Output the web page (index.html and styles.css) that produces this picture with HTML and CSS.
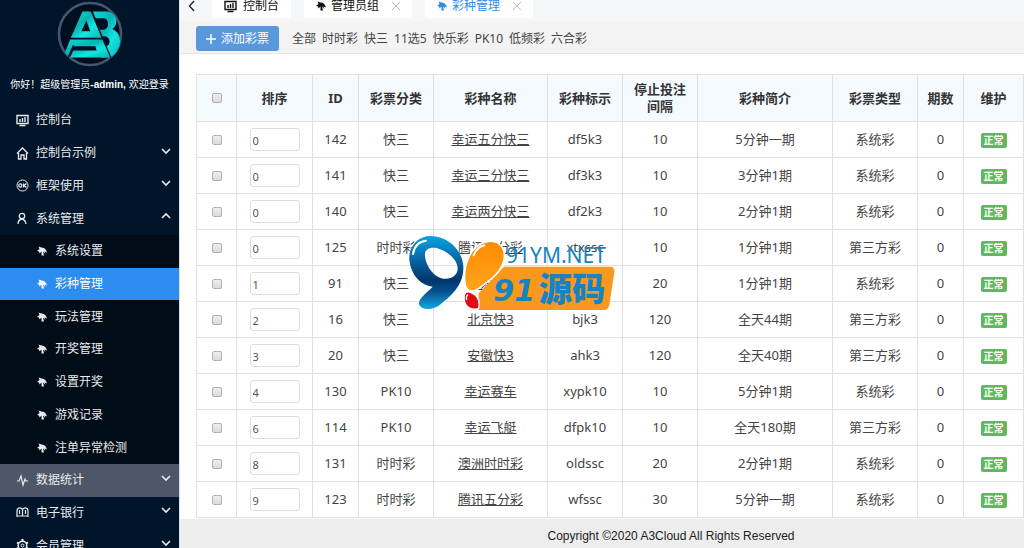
FILE: index.html
```html
<!DOCTYPE html>
<html lang="zh-CN">
<head>
<meta charset="utf-8">
<title>彩种管理</title>
<link rel="stylesheet" href="styles.css">
</head>
<body>
<svg class="defs" aria-hidden="true">
  <symbol id="palm" viewBox="0 0 20 20"><path d="M0 10 5 6 3 1 9 3 14 4 18 8 20 13 15 11 17 16 12 11 14 19H9L9 11 5 15 4 11Z"/></symbol>
  <symbol id="down" viewBox="0 0 10 8"><path d="M1 2 5 6 9 2" fill="none" stroke="currentColor" stroke-width="1.6"/></symbol>
  <symbol id="up" viewBox="0 0 10 8"><path d="M1 6 5 2 9 6" fill="none" stroke="currentColor" stroke-width="1.6"/></symbol>
  <symbol id="board" viewBox="0 0 13 13"><path d="M1 1.5H12V9.500H1Z" fill="none" stroke="currentColor" stroke-width="1.400"/><path d="M4 5V8M6.500 4V8M9 3V8M3.500 11.500H9.500" fill="none" stroke="currentColor" stroke-width="1.400"/></symbol>
</svg>
<aside class="sidebar">
  <header class="profile">
    <svg class="logo" viewBox="18 2 200 200" role="img" aria-label="A3">
      <defs>
        <linearGradient id="teal" x1="0" y1="0" x2="1" y2="1"><stop offset="0" stop-color="#14d6d3"/><stop offset=".4" stop-color="#06b4b4"/><stop offset=".65" stop-color="#14e6e3"/><stop offset="1" stop-color="#06b5b5"/></linearGradient>
      </defs>
      <circle cx="118" cy="102" r="94" fill="#000f20" stroke="#46556f" stroke-width="8"/>
      <path d="M127 34H168C202 36 206 74 186 87C212 98 213 130 204 146C196 164 184 173 168 173H150L148 140H166C182 138 182 110 162 109H153L145 89H160C178 86 176 55 160 54H135Z" fill="url(#teal)"/>
      <path fill-rule="evenodd" d="M95 34H121L153 113H60ZM107 61 92 94H119Z" fill="url(#teal)"/>
      <path d="M58 119H156L178 173H58L67 152H138L134 139H66L53 169 42 158Z" fill="url(#teal)"/>
      <path d="M122 32 181 173M68 136 52 173" fill="none" stroke="#001529" stroke-width="4"/>
    </svg>
    <p class="greeting">你好！超级管理员<b>-admin,</b> 欢迎登录</p>
  </header>
  <nav class="menu">
    <a class="item" href="#"><svg class="icon"><use href="#board"/></svg><span>控制台</span></a>
    <a class="item" href="#"><svg class="icon" viewBox="0 0 13 13"><path d="M1 6.500 6.500 1 12 6.500M2.500 6V12H5V8H8V12H10.500V6" fill="none" stroke="currentColor" stroke-width="1.300"/></svg><span>控制台示例</span><svg class="arrow"><use href="#down"/></svg></a>
    <a class="item" href="#"><svg class="icon" viewBox="0 0 13 13"><circle cx="6.500" cy="6.500" r="5.500" fill="none" stroke="currentColor"/><ellipse cx="4.300" cy="6.500" rx="1.500" ry="1.600" fill="none" stroke="currentColor" stroke-width="1.200"/><path d="M7.500 4.500V8.500M10.500 4.500 8 6.500 10.500 8.500" fill="none" stroke="currentColor" stroke-width="1.300"/></svg><span>框架使用</span><svg class="arrow"><use href="#down"/></svg></a>
    <a class="item" href="#"><svg class="icon" viewBox="0 0 13 13"><circle cx="6" cy="4" r="2.700" fill="none" stroke="currentColor" stroke-width="1.300"/><path d="M2 12C2 9 3.500 7.500 6 7C8.500 7.500 9.500 9 10 12" fill="none" stroke="currentColor" stroke-width="1.300"/></svg><span>系统管理</span><svg class="arrow"><use href="#up"/></svg></a>
    <div class="submenu">
      <a class="item" href="#"><svg class="palm"><use href="#palm"/></svg><span>系统设置</span></a>
      <a class="item active" href="#"><svg class="palm"><use href="#palm"/></svg><span>彩种管理</span></a>
      <a class="item" href="#"><svg class="palm"><use href="#palm"/></svg><span>玩法管理</span></a>
      <a class="item" href="#"><svg class="palm"><use href="#palm"/></svg><span>开奖管理</span></a>
      <a class="item" href="#"><svg class="palm"><use href="#palm"/></svg><span>设置开奖</span></a>
      <a class="item" href="#"><svg class="palm"><use href="#palm"/></svg><span>游戏记录</span></a>
      <a class="item" href="#"><svg class="palm"><use href="#palm"/></svg><span>注单异常检测</span></a>
    </div>
    <a class="item hovered" href="#"><svg class="icon" viewBox="0 0 13 13"><path d="M1 7H3L5 2 7 11 9 5 10 7H12" fill="none" stroke="currentColor" stroke-width="1.200"/></svg><span>数据统计</span><svg class="arrow"><use href="#down"/></svg></a>
    <a class="item" href="#"><svg class="icon" viewBox="0 0 13 13"><path d="M1 11V5C1 1 6 1 6.500 4C7 1 12 1 12 5V11M6.500 4V10M1 10H12M3.500 4V8M9.500 4V8" fill="none" stroke="currentColor" stroke-width="1.200"/></svg><span>电子银行</span><svg class="arrow"><use href="#down"/></svg></a>
    <a class="item" href="#"><svg class="icon" viewBox="0 0 13 13"><circle cx="6.500" cy="6.500" r="4.300" fill="none" stroke="currentColor" stroke-width="1.500"/><circle cx="6.500" cy="6.500" r="1.500" fill="none" stroke="currentColor"/><path d="M6.500 0V2M6.500 11V13M1 3.300 3 4.500M10 8.500 12 9.700M1 9.700 3 8.500M10 4.500 12 3.300" stroke="currentColor" stroke-width="2"/></svg><span>会员管理</span><svg class="arrow"><use href="#down"/></svg></a>
  </nav>
</aside>
<main class="main">
  <div class="tabs">
    <button class="back" aria-label="后退"><svg viewBox="0 0 8 12"><path d="M6 1 1.500 6 6 11" fill="none" stroke="currentColor" stroke-width="1.400"/></svg></button>
    <a class="tab" href="#"><svg class="icon"><use href="#board"/></svg>控制台</a>
    <a class="tab" href="#"><svg class="palm"><use href="#palm"/></svg>管理员组<svg class="close" viewBox="0 0 8 8"><path d="M0 0 8 8M8 0 0 8" stroke="currentColor"/></svg></a>
    <a class="tab current" href="#"><svg class="palm"><use href="#palm"/></svg>彩种管理<svg class="close" viewBox="0 0 8 8"><path d="M0 0 8 8M8 0 0 8" stroke="currentColor"/></svg></a>
  </div>
  <div class="toolbar">
    <button class="add"><svg viewBox="0 0 10 10"><path d="M5 0V10M0 5H10" stroke="currentColor" stroke-width="1.500"/></svg>添加彩票</button>
    <a href="#">全部</a><a href="#">时时彩</a><a href="#">快三</a><a href="#">11选5</a><a href="#">快乐彩</a><a href="#">PK10</a><a href="#">低频彩</a><a href="#">六合彩</a>
  </div>
  <section class="content">
    <table class="lotteries">
      <colgroup><col class="w-check"><col class="w-sort"><col class="w-small"><col class="w-mid"><col class="w-name"><col class="w-mid"><col class="w-mid"><col><col class="w-type"><col class="w-small"><col class="w-state"></colgroup>
      <thead><tr><th><input type="checkbox" aria-label="全选"></th><th>排序</th><th>ID</th><th>彩票分类</th><th>彩种名称</th><th>彩种标示</th><th>停止投注间隔</th><th>彩种简介</th><th>彩票类型</th><th>期数</th><th>维护</th></tr></thead>
      <tbody>
        <tr><td><input type="checkbox" aria-label="选择 142"></td><td><input class="sort" type="text" value="0" aria-label="排序 142"></td><td>142</td><td>快三</td><td><a href="#">幸运五分快三</a></td><td>df5k3</td><td>10</td><td>5分钟一期</td><td>系统彩</td><td>0</td><td><span class="badge">正常</span></td></tr>
        <tr><td><input type="checkbox" aria-label="选择 141"></td><td><input class="sort" type="text" value="0" aria-label="排序 141"></td><td>141</td><td>快三</td><td><a href="#">幸运三分快三</a></td><td>df3k3</td><td>10</td><td>3分钟1期</td><td>系统彩</td><td>0</td><td><span class="badge">正常</span></td></tr>
        <tr><td><input type="checkbox" aria-label="选择 140"></td><td><input class="sort" type="text" value="0" aria-label="排序 140"></td><td>140</td><td>快三</td><td><a href="#">幸运两分快三</a></td><td>df2k3</td><td>10</td><td>2分钟1期</td><td>系统彩</td><td>0</td><td><span class="badge">正常</span></td></tr>
        <tr><td><input type="checkbox" aria-label="选择 125"></td><td><input class="sort" type="text" value="0" aria-label="排序 125"></td><td>125</td><td>时时彩</td><td><a href="#">腾讯一分彩</a></td><td>xtxssc</td><td>10</td><td>1分钟1期</td><td>第三方彩</td><td>0</td><td><span class="badge">正常</span></td></tr>
        <tr><td><input type="checkbox" aria-label="选择 91"></td><td><input class="sort" type="text" value="1" aria-label="排序 91"></td><td>91</td><td>快三</td><td><a href="#">大发快3</a></td><td></td><td>20</td><td>1分钟1期</td><td>系统彩</td><td>0</td><td><span class="badge">正常</span></td></tr>
        <tr><td><input type="checkbox" aria-label="选择 16"></td><td><input class="sort" type="text" value="2" aria-label="排序 16"></td><td>16</td><td>快三</td><td><a href="#">北京快3</a></td><td>bjk3</td><td>120</td><td>全天44期</td><td>第三方彩</td><td>0</td><td><span class="badge">正常</span></td></tr>
        <tr><td><input type="checkbox" aria-label="选择 20"></td><td><input class="sort" type="text" value="3" aria-label="排序 20"></td><td>20</td><td>快三</td><td><a href="#">安徽快3</a></td><td>ahk3</td><td>120</td><td>全天40期</td><td>第三方彩</td><td>0</td><td><span class="badge">正常</span></td></tr>
        <tr><td><input type="checkbox" aria-label="选择 130"></td><td><input class="sort" type="text" value="4" aria-label="排序 130"></td><td>130</td><td>PK10</td><td><a href="#">幸运赛车</a></td><td>xypk10</td><td>10</td><td>5分钟1期</td><td>系统彩</td><td>0</td><td><span class="badge">正常</span></td></tr>
        <tr><td><input type="checkbox" aria-label="选择 114"></td><td><input class="sort" type="text" value="6" aria-label="排序 114"></td><td>114</td><td>PK10</td><td><a href="#">幸运飞艇</a></td><td>dfpk10</td><td>10</td><td>全天180期</td><td>第三方彩</td><td>0</td><td><span class="badge">正常</span></td></tr>
        <tr><td><input type="checkbox" aria-label="选择 131"></td><td><input class="sort" type="text" value="8" aria-label="排序 131"></td><td>131</td><td>时时彩</td><td><a href="#">澳洲时时彩</a></td><td>oldssc</td><td>20</td><td>2分钟1期</td><td>系统彩</td><td>0</td><td><span class="badge">正常</span></td></tr>
        <tr><td><input type="checkbox" aria-label="选择 123"></td><td><input class="sort" type="text" value="9" aria-label="排序 123"></td><td>123</td><td>时时彩</td><td><a href="#">腾讯五分彩</a></td><td>wfssc</td><td>30</td><td>5分钟一期</td><td>系统彩</td><td>0</td><td><span class="badge">正常</span></td></tr>
      </tbody>
    </table>
  </section>
  <footer class="footer">Copyright ©2020 A3Cloud All Rights Reserved</footer>
</main>
<svg class="watermark" viewBox="0 0 690 285" role="img" aria-label="91源码">
  <defs>
    <linearGradient id="blue" x1="0" y1="0" x2="0" y2="1"><stop offset="0" stop-color="#0aa5e2"/><stop offset=".25" stop-color="#0874b3"/><stop offset=".6" stop-color="#02356c"/><stop offset=".75" stop-color="#054e8b"/><stop offset="1" stop-color="#12a7e4"/></linearGradient>
    <linearGradient id="orange" x1="0" y1="0" x2="0" y2="1"><stop offset="0" stop-color="#ff8a00"/><stop offset="1" stop-color="#ffa51f"/></linearGradient>
  </defs>
  <path d="M312 125H630Q646 126 643 142L628 240Q625 255 610 255H236V205Z" fill="#f8981d"/>
  <path fill-rule="evenodd" d="M28 105C25 60 58 32 93 33C148 35 192 80 190 132C188 185 150 215 120 239C98 256 66 257 58 240C51 224 78 205 98 185C60 180 33 150 28 105ZM75 93C72 70 95 63 120 73C150 84 174 108 173 133C171 156 145 168 120 158C95 149 78 120 75 93Z" fill="url(#blue)"/>
  <path d="M39 87C43 61 60 49 78 47" fill="none" stroke="#fff" stroke-width="6" stroke-linecap="round"/>
  <path d="M195 177C188 130 207 56 265 49C300 47 316 70 313 99C307 141 271 165 237 190C216 204 199 200 195 177Z" fill="url(#orange)" stroke="#fff" stroke-width="5"/>
  <path d="M221 91C228 73 240 64 253 61" fill="none" stroke="#fff" stroke-width="6" stroke-linecap="round"/>
  <path d="M193 209C198 195 211 200 223 208C236 217 240 233 236 250C216 258 188 248 193 209Z" fill="#e50913" stroke="#fff" stroke-width="4"/>
  <path d="M200 225Q197 214 204 209" fill="none" stroke="#fff" stroke-width="4"/>
  <text class="mark-site" x="318" y="113">91YM.NET</text>
  <text class="mark-digits" x="280" y="229">91</text>
  <text class="mark-name" x="416" y="229">源码</text>
</svg>
</body>
</html>
```
FILE: styles.css
```css
* { box-sizing: border-box; }
body {
  margin: 0;
  height: 100vh;
  display: flex;
  overflow: hidden;
  position: relative;
  background: #fff;
  color: #444;
  font: 12px/16px "Noto Sans", "Noto Sans CJK SC", sans-serif;
}
a { color: inherit; text-decoration: none; }
.defs { position: absolute; width: 0; height: 0; }
.icon { width: 13px; height: 13px; flex: none; }
.palm { width: 10px; height: 10px; flex: none; fill: currentColor; }

.sidebar {
  width: 180px;
  flex: none;
  display: flex;
  flex-direction: column;
  overflow: hidden;
  background: #001529;
  border-right: 1px solid #dde1e6;
  color: #e8eaed;
}
.profile {
  display: flex;
  flex-direction: column;
  align-items: center;
  gap: 10px;
  padding: 1px 0 11px;
}
.logo { width: 66px; height: 66px; }
.greeting {
  margin: 0;
  color: #fff;
  font: 10px/16px "Liberation Sans", "Noto Sans CJK SC", sans-serif;
  white-space: nowrap;
}
.menu { flex: 0 0 458px; display: flex; flex-direction: column; }
.item {
  flex: 1;
  display: flex;
  align-items: center;
  gap: 7px;
  padding: 0 8px 0 16px;
}
.item span { flex: 1; }
.arrow { width: 10px; height: 8px; margin-bottom: 5px; }
.submenu { flex: 7; display: flex; flex-direction: column; background: #000c17; }
.submenu .item { gap: 8px; padding-left: 37px; }
.item.active { background: #2d8cf0; color: #fff; }
.item.hovered { background: #50566a; }

.main { flex: 1; min-width: 0; display: flex; flex-direction: column; }
.tabs {
  flex: none;
  height: 21px;
  display: flex;
  align-items: flex-end;
  gap: 13px;
  padding: 0 8px 3px;
  overflow: hidden;
  background: #f5f7f9;
}
.back { width: 11px; height: 24px; padding: 0; border: 0; background: none; color: #222; }
.back svg { display: block; width: 8px; height: 12px; }
.tab {
  height: 24px;
  display: flex;
  align-items: center;
  gap: 5px;
  padding: 0 12px;
  border-radius: 2px;
  background: #fff;
  color: #111;
}
.tab .icon { margin-right: 1px; }
.tab.current { color: #2d8cf0; }
.close { width: 8px; height: 8px; margin-left: 8px; color: #bbb; }
.toolbar {
  flex: none;
  display: flex;
  align-items: center;
  gap: 6px;
  padding: 5px 16px 2px;
  border-bottom: 1px solid #e5e5e5;
  background: #f3f3f3;
}
.add {
  display: flex;
  align-items: center;
  gap: 5px;
  height: 25px;
  margin-right: 7px;
  padding: 0 10px;
  border: 0;
  border-radius: 3px;
  background: #5a98de;
  color: #fff;
  font: inherit;
}
.add svg { width: 10px; height: 10px; }

.content { flex: 1; min-height: 0; overflow: hidden; padding: 20px 0 0 16px; }
.lotteries {
  width: 100%;
  table-layout: fixed;
  border-collapse: collapse;
  font-size: 13px;
  line-height: 17px;
  text-align: center;
}
.w-check { width: 40px; }
.w-sort { width: 76px; }
.w-small { width: 46px; }
.w-mid { width: 75px; }
.w-name { width: 114px; }
.w-type { width: 85px; }
.w-state { width: 60px; }
th, td { padding: 0 8px; border: 1px solid #e0e0e0; }
th { height: 47px; background: #f5faff; color: #333; }
td { height: 36px; }
td a { text-decoration: underline; }
input[type="checkbox"] {
  appearance: none;
  display: block;
  width: 10px;
  height: 10px;
  margin: 0 auto;
  border: 1px solid #b0b0b0;
  border-radius: 2px;
  background: linear-gradient(#eee, #dcdcdc);
}
.sort {
  display: block;
  width: 50px;
  height: 23px;
  margin: 0 auto;
  padding: 1px 2px 0;
  border: 1px solid #ddd;
  border-radius: 3px;
  color: #555;
  font: 11px "Noto Sans", sans-serif;
}
td:nth-child(2) { padding: 0; }
.badge {
  display: inline-block;
  padding: 0 3px;
  border-radius: 2px;
  background: #5eb95e;
  color: #fff;
  font-size: 10px;
  font-weight: 700;
  line-height: 15px;
}
.footer {
  flex: none;
  padding: 9px 0 4px 138px;
  background: #ededed;
  color: #222;
  font: 12px/16px "Liberation Sans", sans-serif;
  text-align: center;
}

.watermark { position: absolute; left: 400px; top: 225px; width: 230px; height: 95px; }
.mark-site { fill: #1683c4; font: 63px "Noto Sans", sans-serif; }
.mark-digits { fill: #1683c4; font: italic 700 90px "DejaVu Sans", sans-serif; }
.mark-name { fill: #1683c4; font: 900 100px "Noto Sans CJK SC", sans-serif; }
```
